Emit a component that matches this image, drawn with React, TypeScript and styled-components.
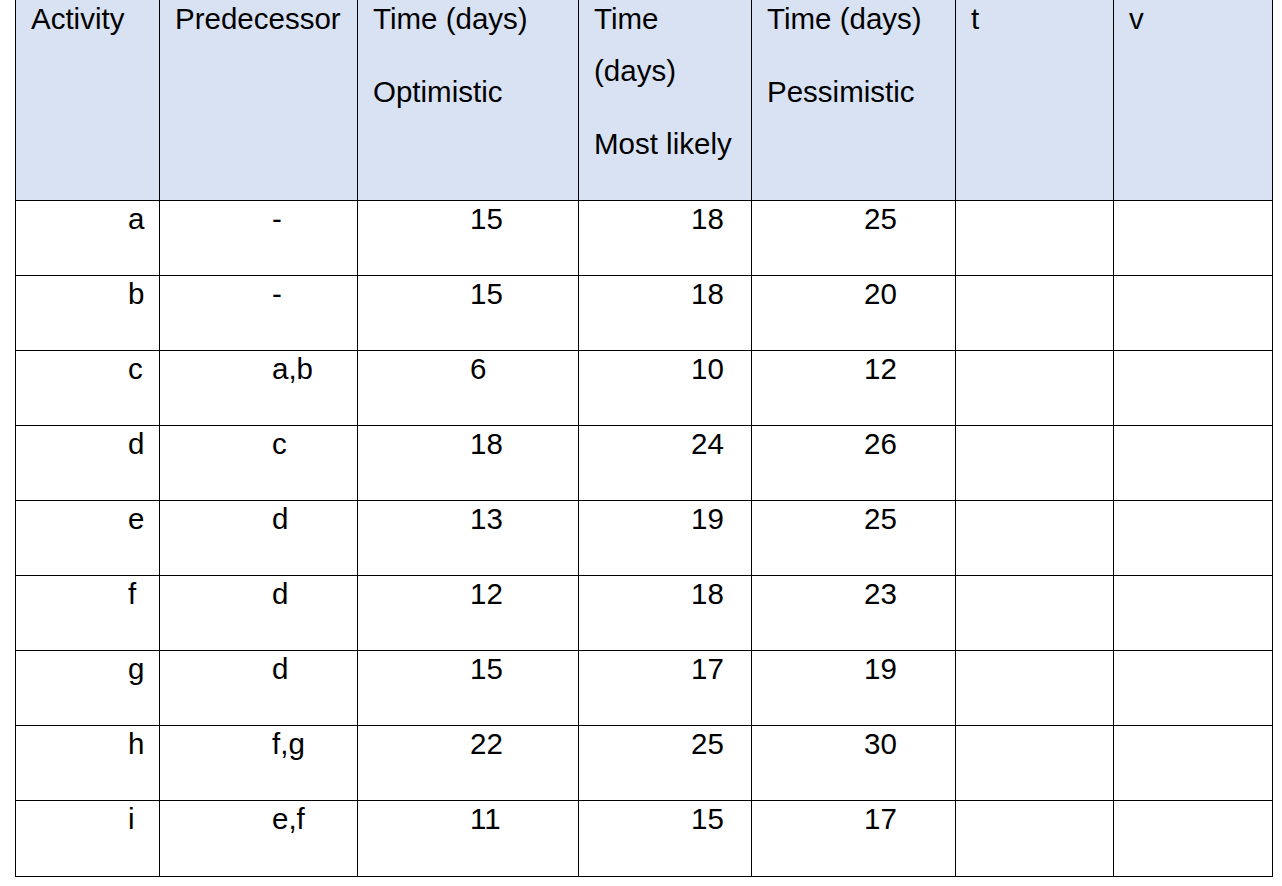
import styled, { createGlobalStyle } from "styled-components";

const GlobalStyle = createGlobalStyle`
  html, body {
    margin: 0;
    padding: 0;
    background: #ffffff;
  }
  body {
    font-family: "Liberation Sans", Arial, sans-serif;
    color: #000000;
    overflow: hidden;
  }
`;

interface Row {
  activity: string;
  predecessor: string;
  optimistic: string;
  likely: string;
  pessimistic: string;
}

const rows: Row[] = [
  { activity: "a", predecessor: "-", optimistic: "15", likely: "18", pessimistic: "25" },
  { activity: "b", predecessor: "-", optimistic: "15", likely: "18", pessimistic: "20" },
  { activity: "c", predecessor: "a,b", optimistic: "6", likely: "10", pessimistic: "12" },
  { activity: "d", predecessor: "c", optimistic: "18", likely: "24", pessimistic: "26" },
  { activity: "e", predecessor: "d", optimistic: "13", likely: "19", pessimistic: "25" },
  { activity: "f", predecessor: "d", optimistic: "12", likely: "18", pessimistic: "23" },
  { activity: "g", predecessor: "d", optimistic: "15", likely: "17", pessimistic: "19" },
  { activity: "h", predecessor: "f,g", optimistic: "22", likely: "25", pessimistic: "30" },
  { activity: "i", predecessor: "e,f", optimistic: "11", likely: "15", pessimistic: "17" },
];

const headers: string[][] = [
  ["Activity"],
  ["Predecessor"],
  ["Time (days)", "Optimistic"],
  ["Time (days)", "Most likely"],
  ["Time (days)", "Pessimistic"],
  ["t"],
  ["v"],
];

const widths = [144, 198, 221, 173, 204, 158, 159];

export default function App() {
  return (
    <>
      <GlobalStyle />
      <Page>
        <Table>
          <colgroup>
            {widths.map((w, i) => (
              <col key={i} style={{ width: w }} />
            ))}
          </colgroup>
          <thead>
            <tr>
              {headers.map((lines, i) => (
                <HeadCell key={i} $narrow={i === 3}>
                  <HeadText>
                    {lines.map((line, j) => (
                      <Para key={j}>{line}</Para>
                    ))}
                  </HeadText>
                </HeadCell>
              ))}
            </tr>
          </thead>
          <tbody>
            {rows.map((r, i) => {
              const last = i === rows.length - 1;
              return (
                <tr key={r.activity}>
                  <Cell $last={last}>{r.activity}</Cell>
                  <Cell $last={last}>{r.predecessor}</Cell>
                  <Cell $last={last}>{r.optimistic}</Cell>
                  <Cell $last={last}>{r.likely}</Cell>
                  <Cell $last={last}>{r.pessimistic}</Cell>
                  <Cell $last={last} />
                  <Cell $last={last} />
                </tr>
              );
            })}
          </tbody>
        </Table>
      </Page>
    </>
  );
}

const Page = styled.div`
  padding-left: 15px;
  margin-top: -1px;
`;

const Table = styled.table`
  border-collapse: collapse;
  table-layout: fixed;
  width: 1258px;
  font-size: 29.5px;
`;

const HeadCell = styled.th<{ $narrow?: boolean }>`
  background: #d9e2f3;
  border: 1px solid #000000;
  height: 201px;
  padding: 0 ${(p) => (p.$narrow ? "6px" : "12px")} 0 15px;
  text-align: left;
  vertical-align: top;
  font-weight: normal;
  overflow: hidden;
  box-sizing: border-box;
`;

const HeadText = styled.div`
  margin-top: -7px;
`;

const Para = styled.p`
  margin: 0 0 21px 0;
  line-height: 52px;
`;

const Cell = styled.td<{ $last?: boolean }>`
  border: 1px solid #000000;
  height: ${(p) => (p.$last ? "76px" : "75px")};
  padding: 1px 0 0 112px;
  text-align: left;
  vertical-align: top;
  line-height: normal;
  box-sizing: border-box;
`;
